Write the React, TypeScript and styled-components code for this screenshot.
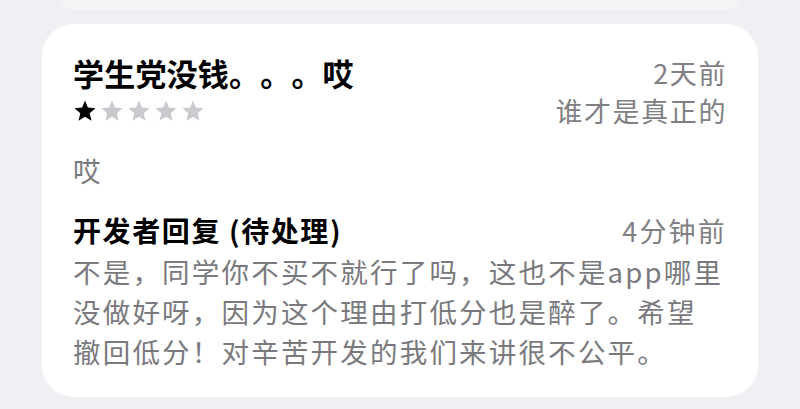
import React from "react";
import styled, { createGlobalStyle } from "styled-components";

const GlobalStyle = createGlobalStyle`
  html, body {
    margin: 0;
    padding: 0;
    background: #efeff4;
  }
  body {
    font-family: "Noto Sans CJK SC", "Noto Sans", sans-serif;
    -webkit-font-smoothing: antialiased;
    text-spacing-trim: space-all;
  }
`;

const Page = styled.div`
  width: 800px;
  height: 409px;
  overflow: hidden;
  display: flex;
  flex-direction: column;
  background: #efeff4;
`;

const GhostCard = styled.div`
  flex-shrink: 0;
  height: 10px;
  margin: 0 62px;
  background: #f5f5f8;
  border-radius: 0 0 22px 22px;
`;

const Card = styled.div`
  flex-shrink: 0;
  margin: 14px 42px 0;
  background: #ffffff;
  border-radius: 32px;
  padding: 30px 31px 26px 31px;
  display: flex;
  flex-direction: column;
`;

const Header = styled.div`
  display: flex;
  justify-content: space-between;
  align-items: flex-start;
`;

const LeftCol = styled.div`
  display: flex;
  flex-direction: column;
`;

const RightCol = styled.div`
  display: flex;
  flex-direction: column;
  align-items: flex-end;
`;

const Title = styled.div`
  font-size: 31px;
  line-height: 38px;
  font-weight: 700;
  color: #000;
  letter-spacing: 0.2px;
  text-spacing-trim: space-all;
`;

const Meta = styled.div`
  font-size: 27px;
  line-height: 38px;
  color: #808084;
  letter-spacing: 1.6px;
`;

const Stars = styled.div`
  display: flex;
  gap: 3px;
  margin-top: 7px;
  height: 24px;
  align-items: center;
`;

const Body = styled.div<{ $gap?: number }>`
  font-size: 27.5px;
  line-height: 40px;
  color: #7a7a7e;
  letter-spacing: 2.2px;
  white-space: nowrap;
  margin-top: ${(p) => p.$gap ?? 0}px;
  text-spacing-trim: space-all;
`;

const ReplyHead = styled.div`
  margin-top: 20px;
  display: flex;
  justify-content: space-between;
  align-items: baseline;
`;

const ReplyTitle = styled.div`
  font-size: 28px;
  line-height: 40px;
  font-weight: 700;
  color: #000;
  letter-spacing: 1.6px;
`;

const ReplyTime = styled.div`
  font-size: 27px;
  line-height: 40px;
  color: #808084;
  letter-spacing: 2.2px;
`;

const Star = ({ filled }: { filled: boolean }) => (
  <svg width="24" height="24" viewBox="0 0 24 24">
    <polygon
      points="12,1.5 14.9,8.6 22.5,9.2 16.7,14.2 18.5,21.8 12,17.8 5.5,21.8 7.3,14.2 1.5,9.2 9.1,8.6"
      fill={filled ? "#000" : "#c9c9ce"}
    />
  </svg>
);

export default function App() {
  return (
    <Page>
      <GlobalStyle />
      <GhostCard />
      <Card>
        <Header>
          <LeftCol>
            <Title>学生党没钱。。。哎</Title>
            <Stars>
              {[0, 1, 2, 3, 4].map((i) => (
                <Star key={i} filled={i < 1} />
              ))}
            </Stars>
          </LeftCol>
          <RightCol>
            <Meta>2天前</Meta>
            <Meta>谁才是真正的</Meta>
          </RightCol>
        </Header>
        <Body $gap={20}>哎</Body>
        <ReplyHead>
          <ReplyTitle>开发者回复 (待处理)</ReplyTitle>
          <ReplyTime>4分钟前</ReplyTime>
        </ReplyHead>
        <Body>
          不是，同学你不买不就行了吗，这也不是app哪里
          <br />
          没做好呀，因为这个理由打低分也是醉了。希望
          <br />
          撤回低分！对辛苦开发的我们来讲很不公平。
        </Body>
      </Card>
    </Page>
  );
}
